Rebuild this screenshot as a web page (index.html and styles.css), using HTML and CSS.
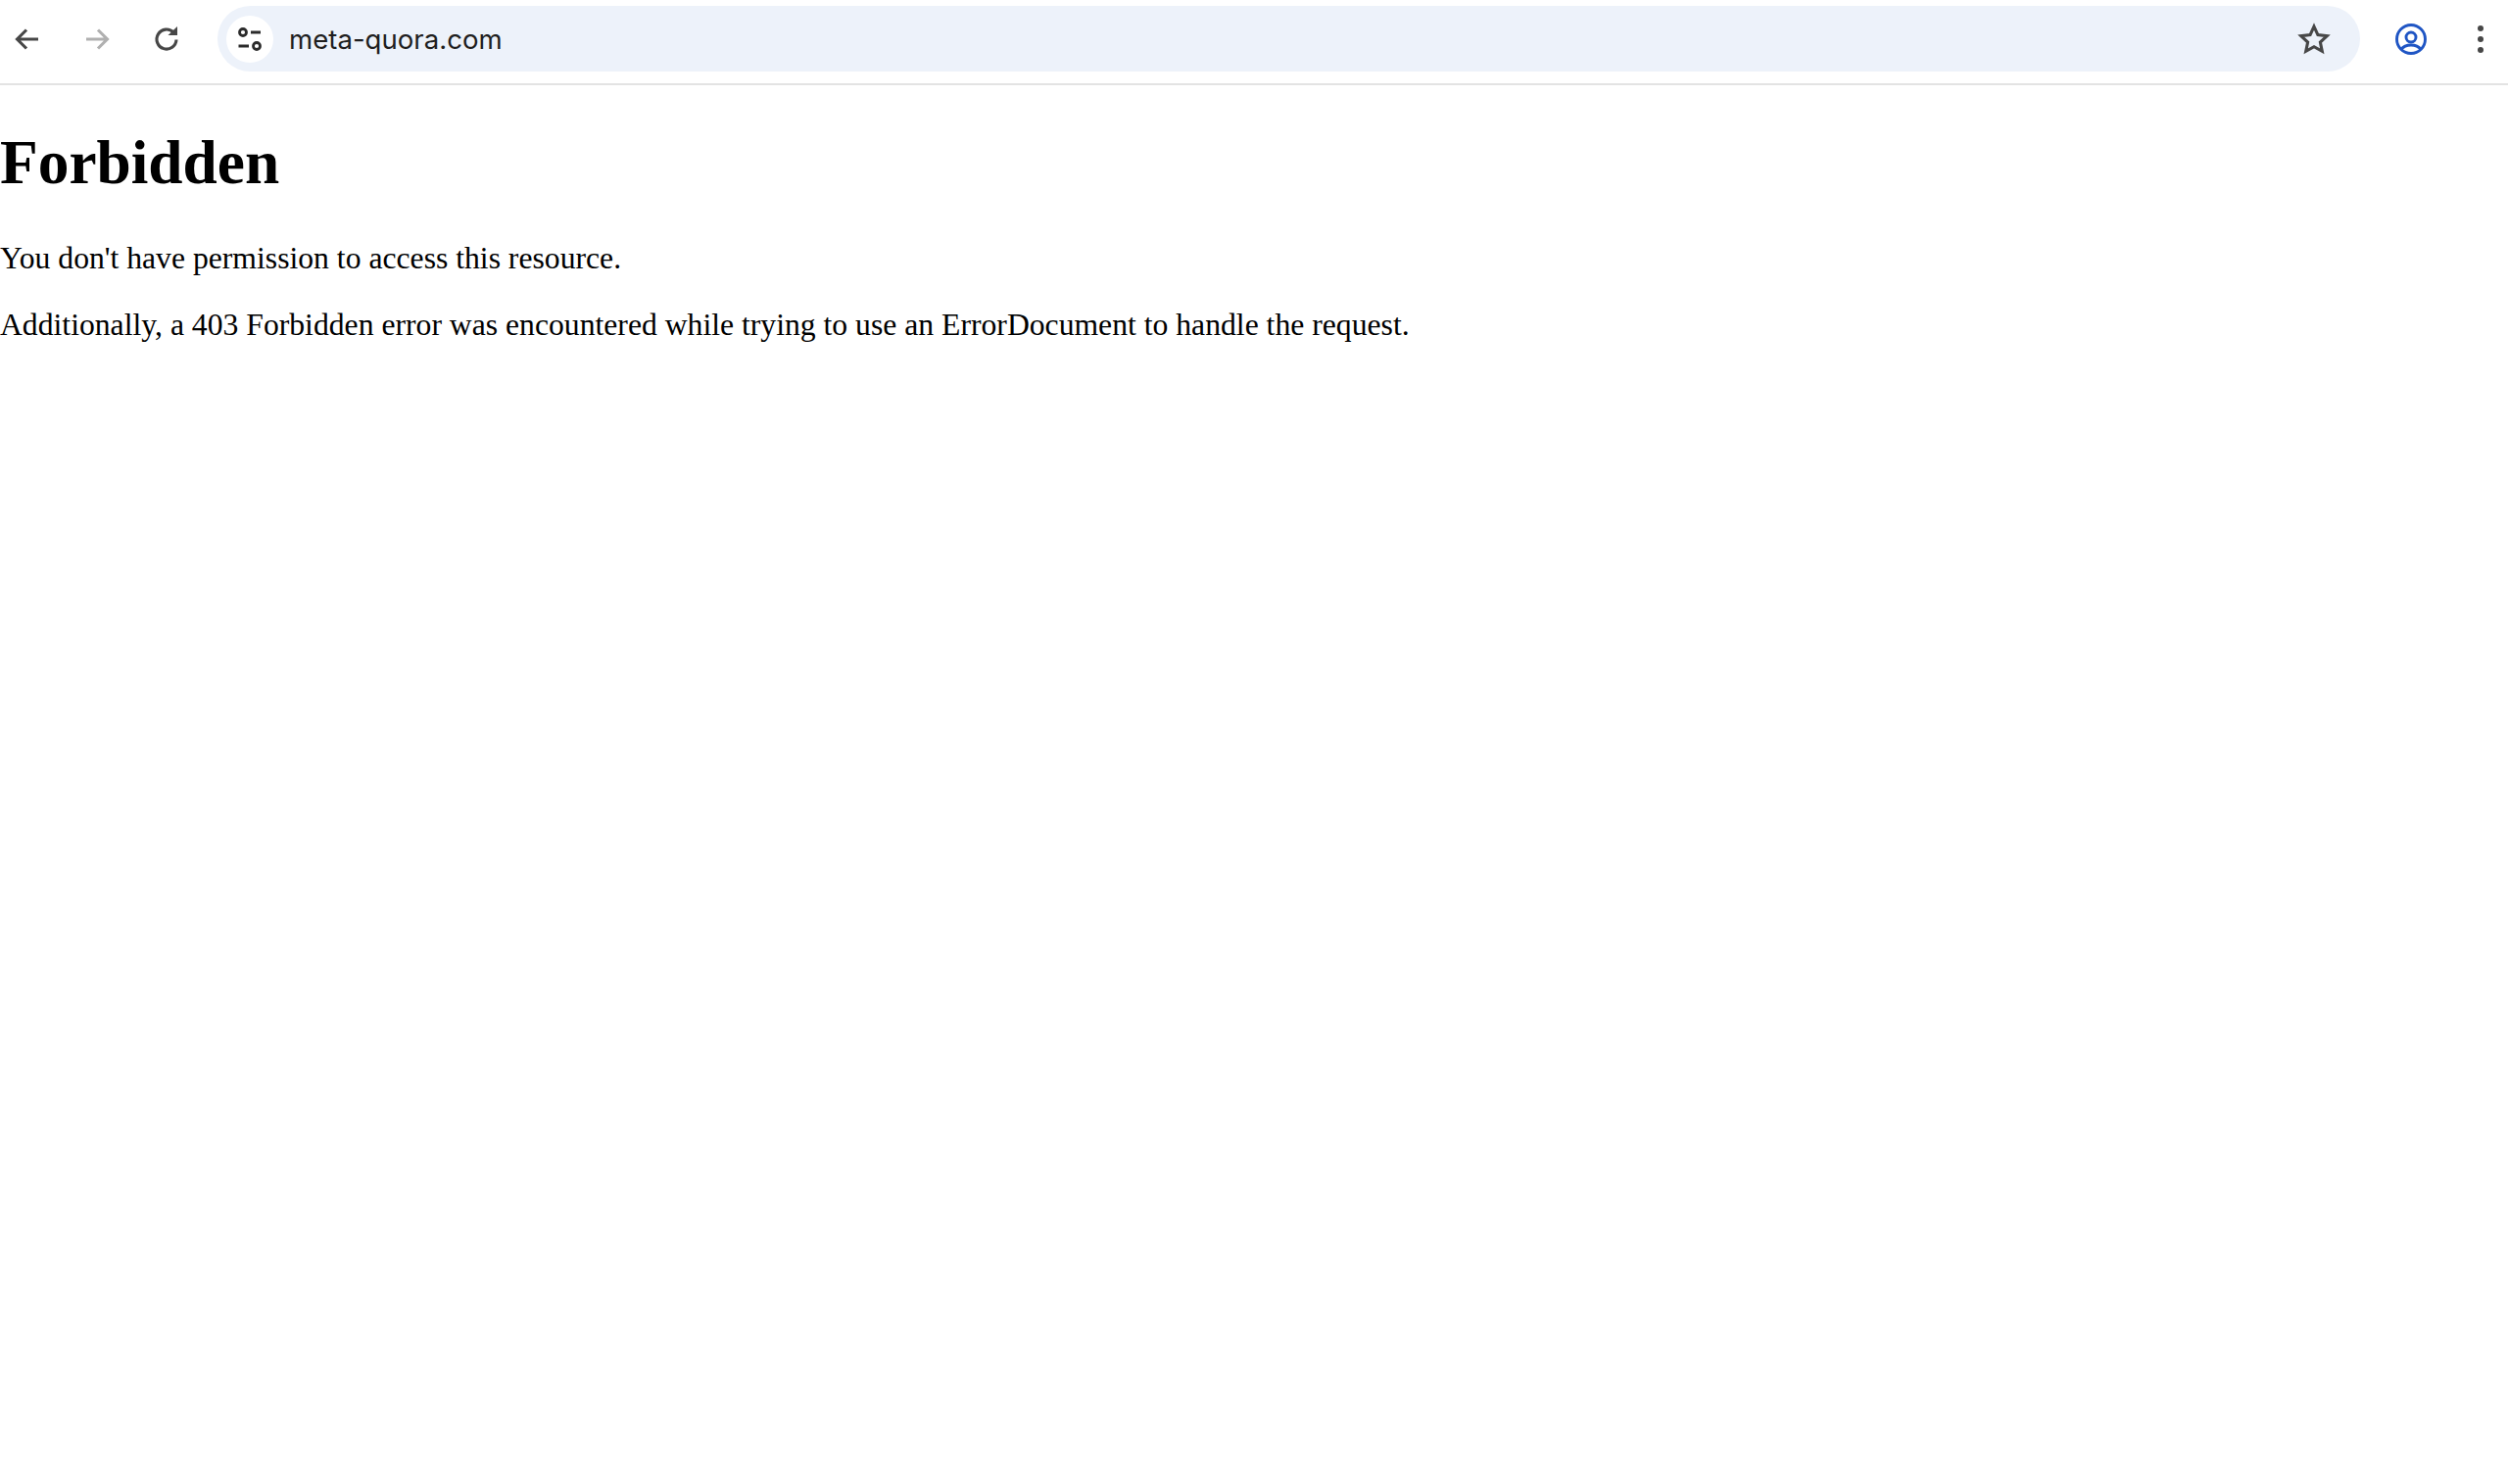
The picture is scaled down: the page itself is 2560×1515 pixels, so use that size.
FILE: index.html
```html
<!DOCTYPE html>
<html lang="en">
<head>
<meta charset="utf-8">
<title>403 Forbidden</title>
<link rel="stylesheet" href="styles.css">
</head>
<body>
<header class="toolbar">
  <div class="nav">
    <svg class="icon" viewBox="0 0 28 28"><path class="s-dark" d="M25 14H4M13 4.500 3.500 14l9.500 9.500"/></svg>
    <svg class="icon" viewBox="0 0 28 28"><path class="s-light" d="M3 14h21M15 4.500l9.500 9.500-9.500 9.500"/></svg>
    <svg class="icon" viewBox="0 0 28 28"><path class="s-dark" d="M24 14.500a10 10 0 1 1-2.800-7.400"/><path class="f-dark" d="M15.500 10h9.500V1z"/></svg>
  </div>
  <div class="omnibox">
    <div class="tune">
      <svg class="tune-icon" viewBox="0 0 28 28"><circle class="s-ink" cx="7" cy="7" r="3.500"/><path class="s-ink" d="M15 7h10M2.500 21H13"/><circle class="s-ink" cx="21" cy="21" r="3.500"/></svg>
    </div>
    <span class="url">meta-quora.com</span>
    <svg class="star" viewBox="0 0 32 32"><path class="s-star" d="M16 3.800l3.700 8.100 8.800 1-6.500 6 1.800 8.700-7.800-4.400-7.800 4.400 1.800-8.700-6.500-6 8.800-1z"/></svg>
  </div>
  <svg class="avatar" viewBox="0 0 32 32"><circle class="s-blue" cx="16" cy="16" r="14.500"/><circle class="s-blue" cx="16" cy="14" r="5"/><path class="s-blue" d="M6 26.500c2.500-3.500 6-4.500 10-4.500s7.500 1 10 4.500"/></svg>
  <svg class="menu" viewBox="0 0 8 32"><circle class="f-dark" cx="4" cy="5" r="3"/><circle class="f-dark" cx="4" cy="16" r="3"/><circle class="f-dark" cx="4" cy="27" r="3"/></svg>
</header>
<main class="doc">
  <h1>Forbidden</h1>
  <p>You don't have permission to access this resource.</p>
  <p>Additionally, a 403 Forbidden error was encountered while trying to use an ErrorDocument to handle the request.</p>
</main>
</body>
</html>
```
FILE: styles.css
```css
html, body { margin: 0; padding: 0; background: #fff; }
body { font-family: "Liberation Serif", "Times New Roman", serif; color: #000; height: 1515px; overflow: hidden; }
.toolbar { display: flex; align-items: center; height: 87px; padding: 0 24px 6px 14px; box-sizing: border-box; border-bottom: 2px solid #e3e3e3; }
.nav { display: flex; gap: 43px; align-items: center; margin-right: 38px; }
.icon { width: 28px; height: 28px; display: block; }
.s-dark, .s-light, .s-ink, .s-blue, .s-star { fill: none; stroke-width: 3.100; }
.s-dark, .s-star { stroke: #474747; }
.s-light { stroke: #b0b0b0; }
.s-ink { stroke: #2b2b2b; stroke-width: 2.800; }
.s-blue { stroke: #1f55c4; stroke-width: 2.900; }
.s-star { stroke-width: 2.900; }
.f-dark { fill: #474747; }
.omnibox { flex: 1; display: flex; align-items: center; height: 67px; background: #edf2fa; border-radius: 34px; padding: 0 30px 0 9px; }
.tune { width: 48px; height: 48px; border-radius: 50%; background: #fff; display: flex; align-items: center; justify-content: center; flex: none; }
.tune-icon { width: 28px; height: 28px; }
.url { flex: 1; margin-left: 16px; font-family: Inter, "Liberation Sans", sans-serif; font-size: 27.6px; color: #1f1f1f; }
.star { width: 34px; height: 34px; }
.avatar { width: 32px; height: 32px; margin-left: 36px; }
.menu { width: 8px; height: 32px; margin-left: 51px; }
.doc h1 { font-size: 63.36px; font-weight: bold; margin: 42px 0 43px; line-height: 74px; }
.doc p { font-size: 31.68px; line-height: 36px; margin: 32px 0 0; }
```
